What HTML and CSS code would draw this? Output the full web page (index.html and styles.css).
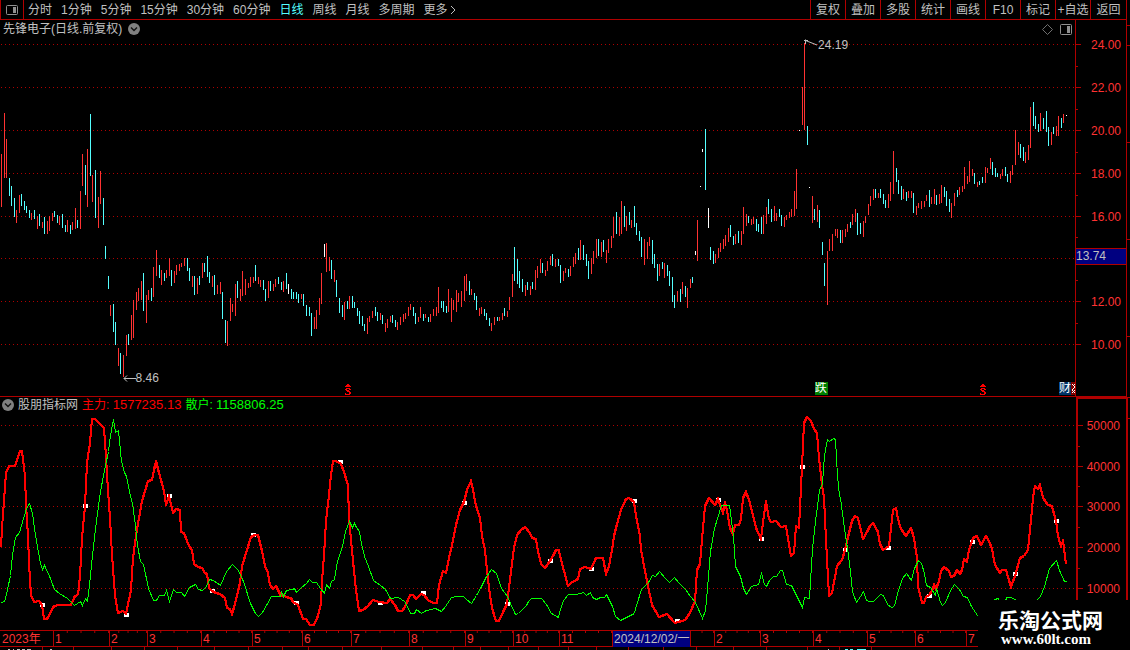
FILE: index.html
```html
<!DOCTYPE html>
<html lang="zh-CN">
<head>
<meta charset="utf-8">
<title>先锋电子 日线</title>
<link rel="stylesheet" href="styles.css">
</head>
<body>
<div class="screen">
  <header class="toolbar">
    <button class="toggle" type="button" aria-label="侧栏">
      <svg width="12" height="10" viewBox="0 0 12 10"><rect x=".5" y=".5" width="11" height="9" rx="1" fill="none" stroke="#909090"/><rect x="7" y="2" width="3" height="6" fill="#909090"/></svg>
    </button>
    <nav class="periods">
      <button type="button">分时</button>
      <button type="button">1分钟</button>
      <button type="button">5分钟</button>
      <button type="button">15分钟</button>
      <button type="button">30分钟</button>
      <button type="button">60分钟</button>
      <button type="button" class="current">日线</button>
      <button type="button">周线</button>
      <button type="button">月线</button>
      <button type="button">多周期</button>
      <button type="button" class="more">更多<svg width="6" height="10" viewBox="0 0 6 10"><path d="M1 1L5 5L1 9" fill="none" stroke="#c0c0c0"/></svg></button>
    </nav>
    <nav class="tools">
      <button type="button">复权</button>
      <button type="button">叠加</button>
      <button type="button">多股</button>
      <button type="button">统计</button>
      <button type="button">画线</button>
      <button type="button">F10</button>
      <button type="button">标记</button>
      <button type="button">+自选</button>
      <button type="button">返回</button>
    </nav>
  </header>

  <main class="workspace">
    <section class="panel price">
      <div class="title">
        <h1>先锋电子(日线.前复权)</h1>
        <button type="button" class="round" aria-label="展开"><svg width="12" height="12" viewBox="0 0 12 12"><circle cx="6" cy="6" r="6" fill="#808080"/><path d="M3 4.5L6 7.5L9 4.5" fill="none" stroke="#111" stroke-width="1.4"/></svg></button>
        <div class="corner">
          <svg width="11" height="11" viewBox="0 0 11 11"><path d="M5.5 .5L10.5 5.5L5.5 10.5L.5 5.5Z" fill="none" stroke="#707070"/></svg>
          <svg width="12" height="11" viewBox="0 0 12 11"><rect x=".5" y=".5" width="11" height="10" rx="1" fill="none" stroke="#909090"/><rect x="7" y="2" width="3" height="7" fill="#909090"/></svg>
        </div>
      </div>
      <svg class="plot" id="price" viewBox="0 38 1075 358" preserveAspectRatio="none"></svg>
      <span class="note high"><svg width="13" height="7" viewBox="0 0 13 7"><path d="M0 1.5H4M1.5 .5V5M1.500 1.500L13 6" fill="none" stroke="#c0c0c0"/></svg>24.19</span>
      <span class="note low"><svg width="13" height="7" viewBox="0 0 13 7"><path d="M1 3.5H13M4 .5L1 3.5L4 6.5" fill="none" stroke="#c0c0c0"/></svg>8.46</span>
      <span class="dividend first"><svg width="6" height="11"><use href="#dividend-sign"/></svg></span>
      <span class="dividend second"><svg width="6" height="11"><use href="#dividend-sign"/></svg></span>
      <span class="badge fall">跌</span>
      <span class="badge report">财</span>
      <span class="badge clipped"><svg width="4" height="13" viewBox="0 0 4 13"><path d="M1 2L4 5L1 8L4 11M4 2L2 4M4 8L1 11" fill="none" stroke="#fff"/></svg></span>
    </section>
    <aside class="scale price-scale">
      <svg id="price-scale"></svg>
      <span class="cursor-price">13.74</span>
    </aside>
    <aside class="edge"><svg id="edge" viewBox="0 0 4 610" preserveAspectRatio="none"></svg></aside>

    <section class="panel indicator">
      <div class="title">
        <button type="button" class="round" aria-label="展开"><svg width="12" height="12" viewBox="0 0 12 12"><circle cx="6" cy="6" r="6" fill="#808080"/><path d="M3 4.5L6 7.5L9 4.5" fill="none" stroke="#111" stroke-width="1.4"/></svg></button>
        <h2>股朋指标网</h2>
        <span class="main-force">主力: <b>1577235.13</b></span>
        <span class="retail">散户: <b>1158806.25</b></span>
      </div>
      <svg class="plot" id="indicator" viewBox="0 413 1075 217" preserveAspectRatio="none"></svg>
    </section>
    <aside class="scale indicator-scale"><svg id="indicator-scale"></svg></aside>
  </main>

  <footer>
    <ol class="timeline">
      <li class="plain">2023年</li><li>1</li><li>2</li><li>3</li><li>4</li><li>5</li><li>6</li><li>7</li><li>8</li><li>9</li><li>10</li><li>11</li><li class="cursor-date">2024/12/02/一</li><li class="half"></li><li>2</li><li>3</li><li>4</li><li>5</li><li>6</li><li class="plain-last">7</li>
    </ol>
    <svg class="strip" id="strip" viewBox="0 0 1130 3" preserveAspectRatio="none"></svg>
  </footer>
  <div class="watermark"><strong>乐淘公式网</strong><span>www.60lt.com</span></div>
</div>
<svg class="symbols" aria-hidden="true"><symbol id="dividend-sign" viewBox="0 0 6 11"><path d="M2 0H4V1H5V2H6V3H0V2H1V1H2ZM1 4H5V5H6V6H4V5H2V6H4V7H5V8H6V10H5V11H0V9H1V10H4V8H2V7H1V6H0V5H1Z" fill="#f00" shape-rendering="crispEdges"/></symbol></svg>
<script src="chart.js"></script>
</body>
</html>
```

FILE: styles.css
```css
* { box-sizing: border-box; }
:root { --line: #b00000; --text: #c0c0c0; --red: #ff3232; }
body {
  margin: 0;
  background: #000;
  color: var(--text);
  font: 12px/16px "Liberation Sans", "Noto Sans CJK SC", sans-serif;
}
button { padding: 0; border: 0; background: none; color: inherit; font: inherit; white-space: nowrap; cursor: pointer; }
h1, h2 { margin: 0; font: inherit; }
svg { display: block; }
.screen { position: relative; display: flex; flex-direction: column; min-height: 100vh; overflow: hidden; }

.toolbar { display: flex; height: 20px; margin-right: 3px; border: solid var(--line); border-width: 0 1px 1px; }
.toggle { display: grid; place-items: center; width: 23px; border-right: 1px solid var(--line); }
.periods { display: flex; gap: 9px; padding-left: 4px; }
.periods .current { color: #54ffff; }
.more { display: flex; align-items: center; gap: 2px; }
.tools { display: flex; margin-left: auto; }
.tools button { width: 35px; border-left: 1px solid var(--line); }
.tools button:last-child { width: 36px; }

.workspace {
  flex: 1;
  display: grid;
  grid-template-columns: minmax(0, 1fr) 51px 4px;
  grid-template-rows: minmax(0, 377fr) minmax(0, 233fr);
}
.panel { position: relative; display: flex; flex-direction: column; min-height: 0; overflow: hidden; }
.price { border-bottom: 1px solid var(--line); }
.title { display: flex; align-items: center; flex: none; }
.price .title { height: 18px; padding: 0 3px; gap: 6px; }
.indicator .title { height: 16px; padding: 0 2px; gap: 4px; }
.title b { font-weight: normal; font-size: 13px; }
.corner { display: flex; gap: 7px; margin-left: auto; }
.main-force { color: #f00; }
.retail { color: #0f0; }
.plot { flex: 1; width: 100%; min-height: 0; shape-rendering: crispEdges; }

.note { position: absolute; display: flex; align-items: center; line-height: 12px; }
.high { left: 74.8%; top: 19px; gap: 1px; }
.high svg { margin-bottom: 5px; }
.low { left: 11.4%; bottom: 12px; }
.dividend { position: absolute; bottom: 1px; }
.first { left: 32.1%; }
.second { left: 91.2%; }
.badge { position: absolute; bottom: 1px; height: 13px; overflow: hidden; color: #fff; line-height: 12px; }
.fall { left: 75.8%; width: 13px; background: #008000; }
.report { right: 4px; width: 12px; background: #003366; }
.clipped { right: 0; width: 4px; background: #800000; }

.scale { position: relative; min-height: 0; }
.scale svg { width: 100%; height: 100%; shape-rendering: crispEdges; }
.scale text { fill: var(--red); text-anchor: end; }
.price-scale { border-left: 1px solid var(--line); border-bottom: 1px solid var(--line); }
.indicator-scale { margin-left: 1px; border: solid var(--line); border-width: 2px 0 0 2px; }
.cursor-price {
  position: absolute; left: 0; right: 0; top: 60.6%; height: 17px;
  border: solid var(--line); border-width: 1px 0;
  background: #000080; line-height: 15px;
}
.edge { grid-column: 3; grid-row: 1 / 3; border-left: 1px solid var(--line); min-height: 0; }
.edge svg { width: 100%; height: 100%; shape-rendering: crispEdges; }
.indicator { grid-column: 1; grid-row: 2; }
.indicator-scale { grid-column: 2; grid-row: 2; }

.timeline {
  display: grid;
  grid-template-columns: 53fr 56fr 38fr 54fr 51fr 50fr 49fr 58fr 56fr 48fr 46fr 53fr 78fr 24fr 46fr 53fr 54fr 48fr 51fr 12fr 152fr;
  height: 17px; margin: 0; padding: 0;
  border: solid var(--line); border-width: 1px 0;
  color: var(--red); list-style: none;
}
.timeline li {
  min-width: 0; padding-left: 1px; border-left: 1px solid var(--line);
  background: linear-gradient(90deg, transparent calc(100% - 1px), var(--line) 0) 0 0 / 25% 2px repeat-x;
  white-space: nowrap;
}
.timeline .plain { background: none; border-color: transparent; }
.timeline .plain-last { background: none; }
.timeline .half { background-size: 50% 2px; }
.timeline .cursor-date { background: #000080; color: var(--text); }
.strip { width: 100%; height: 3px; shape-rendering: crispEdges; }

.watermark {
  position: absolute; right: 0; bottom: 0; width: 152px; height: 50px;
  padding: 7px 0 0 20px; background: #000; color: #fff;
}
.watermark strong { display: block; font: bold 21px/24px "Noto Sans CJK SC", sans-serif; }
.watermark span { display: block; padding-left: 3px; font: bold 15px/16px "Liberation Serif", serif; }
.symbols { position: absolute; width: 0; height: 0; }
```

FILE: chart.js
```js
// Bars are "<kind><x> <high> <low>" in thirds of a unit, relative to the block's origin.
// r = up, c = down, w = flat or limit day.
const barBlocks = [
  [0, 90, "r4 192 350;r13 69 263;r19 147 261;c28 264 317;c34 288 347;c43 324 380;r49 360 398;r58 315 368;c64 312 345;c73 333 357;c79 348 366;c88 360 383;r94 369 389;c103 360 386;r112 380 416;c118 372 407;r127 396 413;c133 381 431;r142 393 431;r148 380 422;r157 369 392;c163 363 380;c172 375 396;r178 380 402;c187 372 413;c196 405 425;r202 390 425;c211 405 431;r217 396 419;r226 354 416;c232 390 413;r241 303 416;r247 192 287;c256 225 314;r262 177 350;c271 72 257;r277 255 335;c286 240 383;r295 321 413;r301 243 341;c310 324 404;c316 468 506;c325 558 596;r331 645 677;c340 642 725;c346 696 764;r355 774 827;c361 789 851;r370 795 860;r379 735 797;c385 732 764;r394 675 749;r400 630 743;r409 606 659;r415 594 632;r424 573 629;c430 549 662;r439 615 698;r445 600 629;c454 594 632;r460 531 620;r469 480 557;c478 525 563;r484 540 584;c493 549 572;r499 540 563;r508 506 557;c514 540 587;r523 543 578;r529 525 554;r538 522 542;r544 519 530;r553 504 527;c562 504 542;c568 534 572;r577 558 590;c583 558 614;r592 564 611;c598 558 584;r607 519 563;c613 519 545;c622 498 560;c628 546 578;r637 558 590;c643 555 614;r652 585 611;r661 576 611;c667 606 686;c676 690 758;r682 693 767;r691 624 692;r697 642 665;r706 582 677;c712 573 623;r721 597 632;r727 543 617;r736 567 614;r745 579 593;r751 561 590;r760 561 578;c766 525 572;r775 561 581;r781 570 590;c790 570 599;c796 597 632;r805 573 623;c811 573 602;r820 582 602;r826 567 590;c835 561 581;c844 576 599;r850 573 605;c859 549 596;w865 582 611"],
  [280, 180, "c34 327 356;c40 336 356;c49 336 356;c55 342 366;r64 342 356;c70 342 377;c79 375 407;c88 381 407;c94 399 467;r103 411 446;r109 390 446;r118 354 404;r124 279 371;w133 192 230;r139 189 275;r148 231 272;c154 240 296;r163 270 305;c169 300 350;c178 354 398;c187 375 410;r193 366 419;c202 363 386;r208 348 386;c217 348 383;c223 366 383;c232 384 407;c238 393 431;c247 408 437;c253 432 452;r262 414 461;r268 408 425;r277 393 413;c286 381 407;c292 396 422;r301 399 419;c307 405 431;r316 429 455;r322 417 443;r331 408 425;c337 405 428;c346 420 440;r352 426 449;r361 411 434;r370 402 425;r376 399 416;r385 381 407;r391 372 389;c400 381 407;c406 399 431;r415 411 425;r421 381 413;c430 402 422;r436 402 413;c445 411 425;r451 402 425;r460 387 407;r469 381 407;r475 321 398;c484 363 383;c490 363 395;c499 378 398;r505 327 395;r514 354 425;r520 360 389;r529 330 395;r535 339 365;r544 333 380;r553 288 362;r559 282 332;c568 303 344;r574 327 344;c583 339 359;c589 348 389;r598 384 407;r604 381 401;c613 387 407;c619 399 419;c628 414 437;r634 429 452;r643 411 434;c652 411 422;r658 411 422;r667 399 419;c673 384 407;r682 393 410;r688 351 389;r697 282 350;c703 201 302;c712 237 311;c718 273 323;c727 297 335;r736 315 347;c742 306 329;r751 318 344;c757 306 326;r766 270 329;r772 258 293;r781 237 278;c787 249 278;r796 270 287;r802 243 272;r811 228 254;c817 222 257;r826 237 260;c835 237 257;c841 255 308;r850 273 302;r856 264 278;c865 267 290"],
  [560, 120, "r31 438 467;r40 411 440;r46 399 431;c55 384 419;r61 360 419;c70 375 419;c79 402 437;c85 423 476;r94 414 461;r100 393 431;r109 357 413;c115 357 407;r124 366 410;c130 360 395;r139 390 428;r145 357 398;r154 348 383;r160 291 353;c169 276 341;r178 291 347;r184 243 341;c193 258 320;r199 288 332;c208 276 314;r214 300 323;c223 258 320;c229 309 344;c238 333 362;c244 351 410;r253 357 434;r262 366 416;r268 351 377;c277 360 431;c283 402 443;c292 432 482;r298 432 467;c307 426 446;r313 429 473;c322 435 467;c328 453 497;c337 471 545;c343 525 563;r352 513 545;c361 507 545;r367 486 521;c376 498 530;r382 504 563;r391 477 503;c397 471 488;w406 393 404;r412 300 422;w421 198 200;w427 87 95;c436 27 209;w445 264 323;c451 381 419;c460 393 431;r466 402 428;r475 384 413;r481 369 395;r490 357 386;r496 345 377;r505 324 365;c511 315 350;c520 348 374;r526 342 371;c535 333 368;r544 333 374;r550 261 341;r559 282 317;c565 288 308;r574 297 314;r580 291 311;c589 297 332;c595 312 335;c604 291 341;r610 285 341;r619 261 311;c625 237 281;c634 267 305;r643 258 302;r649 279 302;c658 267 290;c664 285 317;r673 291 320;r679 285 299;r688 276 293;r694 267 290;r703 213 287;r709 147 266"],
  [790, 30, "w28 300 302;r37 171 284;r43 40 299;c52 288 344;w58 471 473;r67 498 578;c73 537 569;r82 525 575;c88 540 593;c97 636 674;c103 699 767;r112 663 824;r118 627 662;r127 612 662;r136 597 617;r142 597 623;c151 600 638;r157 600 638;r166 597 620;r172 582 605;c181 576 593;r187 552 584;r196 537 575;c202 549 614;c211 579 611;r220 573 620;r226 558 578;r235 522 554;r241 498 527;r250 477 509;c256 477 503;r265 489 503;c271 477 503;c280 492 521;c286 510 533;r295 492 533;r301 456 512;r310 363 491;c319 414 455;c325 450 491;c334 468 509;r340 477 506;c349 486 512;r355 483 503;r364 483 503;c370 489 548;r379 528 554;r385 519 533;r394 513 536;r403 513 530;r409 495 512;c418 480 530;r424 501 521;r433 477 521;c439 495 524;r448 492 521;r454 465 518;c463 471 500;c469 483 527;c478 507 545;r484 519 563;r493 489 527;c502 480 500;r508 471 494;r517 468 485;r523 411 476;r532 438 461;r538 393 455;r547 417 437;c553 429 461;r562 456 470;c568 453 464;c577 441 458;r586 411 458;r592 414 428;r601 384 416;c607 396 434;c616 414 440;c622 429 440;r631 432 446;r637 417 437;c646 411 437;c652 432 455;r661 423 458;r667 405 434;r676 300 404;r685 336 374;c691 342 383;c700 351 392;r706 366 398;r715 345 389;r721 231 353;c730 216 287;c736 258 296;c745 282 305;r751 249 302;c760 264 296;c769 243 305;c775 291 347;r784 306 344;c790 291 311;r799 288 317;r805 258 317;c814 264 293;r820 252 278;w829 255 257"]
];

const mainForce = [
  [0, "5,458 8,400 12,320 18,236 27,215 46,215 52,195 60,170 67,170 76,245 80,330 84,425 88,505 93,600 104,621 117,618 128,630 133,674 143,674 163,635 180,630 215,632 225,603 235,600 242,545 246,430 256,335 261,205 270,145 276,72 287,72 300,87 312,100 318,185 326,290 331,370 338,480 345,600 355,655 370,648 380,658 393,585 399,490 408,425 417,370 427,320 437,288 444,258 458,255 468,200 478,235 492,290 499,330 508,305 521,355 530,344 541,346 545,412 553,416 568,455 577,467 583,508 595,518 607,520 615,536 623,538 628,580 638,588 650,594 662,597 677,610 682,640 691,642 698,658 706,628 722,565 728,515 742,465 755,427 765,420 776,422 788,470 797,515 806,535 812,572 820,583 828,575 845,603 852,600 858,608 870,609"],
  [280, "34,609 40,623 55,630 70,674 80,674 90,692 103,690 115,665 124,625 128,560 133,480 140,380 147,300 155,240 161,198 170,198 184,208 194,232 204,272 208,370 215,435 222,530 230,585 237,650 250,646 265,635 280,617 298,623 323,624 331,612 345,630 355,648 367,648 377,636 390,600 400,600 408,612 416,608 425,597 433,600 445,615 460,624 471,624 477,570 490,528 500,536 508,490 518,450 530,390 542,345 553,322 563,285 573,260 580,285 590,335 600,370 606,425 615,465 621,525 628,580 636,640 648,678 657,678 672,645 682,628 688,580 695,530 703,460 712,420 725,405 735,398 750,414 758,430 768,433 776,470 785,508 797,519 810,500 820,485 829,466 837,465"],
  [560, "0,485 12,530 25,573 35,565 56,553 61,522 75,517 95,523 108,490 130,491 139,537 148,515 157,465 163,425 173,388 185,345 198,313 207,311 222,322 230,365 240,425 245,465 257,530 266,575 276,630 298,668 322,659 345,684 375,677 392,655 406,620 412,527 422,508 430,400 437,335 447,310 466,330 476,313 489,355 497,323 503,350 512,400 519,418 526,391 537,390 545,372 549,310 558,291 567,315 578,350 590,400 604,433 612,360 619,318 627,372 635,383 650,378 663,398 680,395 693,484 703,474 709,393 719,400 727,218 733,85 742,66 755,78 763,103 773,115 779,190 786,270 794,310 800,435 808,603 818,595 831,513"],
  [840, "8,497 17,467 22,440 36,380 47,363 54,370 69,432 81,412 90,394 101,385 115,412 122,448 130,467 148,455 153,400 159,347 170,340 175,372 185,402 200,424 215,400 224,430 232,490 236,575 246,625 252,625 258,607 268,602 278,590 284,570 290,582 299,560 304,530 314,516 328,530 334,547 342,543 351,525 360,537 368,525 373,492 382,503 389,465 400,430 412,425 424,452 438,425 447,440 457,462 466,510 481,535 487,525 498,527 513,577 526,545 540,490 553,483 566,465 573,375 580,310 585,275 594,282 601,272 610,310 625,332 638,333 644,357 649,380 655,425 663,455 671,440 678,508"]
];
const retail = [
  [0, "4,622 14,620 20,598 30,540 36,480 47,428 57,413 80,340 89,326 97,355 106,420 120,505 127,523 134,511 150,550 163,583 178,596 202,611 222,632 240,620 248,632 257,610 262,620 268,570 278,480 287,400 300,290 313,225 326,170 332,120 341,73 347,112 354,107 365,200 372,233 380,245 388,290 397,325 405,390 412,450 422,500 430,508 446,580 460,616 470,617 478,602 492,602 500,585 508,620 521,583 530,593 545,593 554,603 568,578 585,567 595,583 608,586 620,575 628,552 640,555 662,570 680,530 697,508 714,526 730,560 751,625 767,655 775,663 788,651 800,630 815,605 832,605"],
  [280, "0,605 5,593 9,603 20,587 36,583 42,580 50,592 65,578 80,565 89,553 98,563 110,562 122,580 133,594 140,568 148,580 155,558 163,553 172,500 186,455 197,410 208,378 216,397 223,384 230,398 238,410 245,445 254,485 266,515 280,555 300,570 316,582 332,610 355,608 372,620 382,635 392,656 402,656 410,644 424,656 440,645 465,640 483,649 495,635 515,608 533,605 550,604 558,613 575,624 590,600 605,573 620,545 634,523 650,535 664,580 682,603 690,625 706,657 715,655 738,630 744,618 755,611 783,610 800,628 815,655 836,667"],
  [560, "0,643 10,617 25,597 50,597 70,593 80,601 92,593 98,608 108,614 120,607 132,607 140,597 158,635 165,665 180,677 205,665 222,656 230,630 245,582 265,563 278,540 285,544 299,530 315,550 329,563 344,548 355,563 375,583 392,603 405,623 427,670 437,645 443,580 450,470 462,400 483,332 507,332 515,375 521,425 527,515 540,543 549,580 559,598 574,575 595,567 603,534 612,568 620,573 627,557 640,545 650,543 662,525 668,527 680,567 695,570 708,600 727,638 733,607 748,610 758,460 766,380 778,285 786,265 793,180 802,132 808,140 820,130 826,133 831,245 838,300"],
  [840, "0,310 12,400 24,480 30,530 38,590 49,622 60,603 70,590 78,615 88,619 100,619 120,598 130,602 142,627 154,638 163,633 175,585 186,550 200,536 214,555 222,520 236,495 244,504 252,535 260,570 270,577 285,600 290,580 300,622 307,631 316,622 330,585 342,568 358,582 370,605 383,608 395,635 412,661 450,660 463,612 475,610 480,625 495,620 500,608 510,607 527,612 550,640 585,640 592,612 600,603 612,575 628,520 649,497 657,525 672,558 678,558"]
];
const signals = [
  [0, "256,335 128,630 380,660 508,305 638,588 760,420"],
  [280, "50,626 180,203 301,624 431,596 553,324 682,627 811,498"],
  [560, "94,524 223,320 352,680 475,315 604,434 727,218"],
  [840, "17,467 146,459 268,603 398,443 526,537 649,380"]
];

const el = id => document.getElementById(id);
const third = n => Math.floor(n / 3);
const read = blocks => blocks.flatMap(([x, list]) =>
  list.split(" ").map(p => p.split(",").map(Number)).map(([a, b]) => [x + third(a), 395 + third(b)]));
const grid = rows => `<path d="${rows.map(y => `M1 ${y}.5H1075`).join("")}" fill="none" stroke="#b00000" stroke-dasharray="1 3"/>`;

// Price panel
const colors = { r: "#ff3232", c: "#54ffff", w: "#ffffff" };
const bars = barBlocks.flatMap(([x, y, list]) => list.split(";").map(item => {
  const [a, top, bottom] = item.slice(1).split(" ").map(Number);
  const y1 = y + third(top), y2 = y + third(bottom) + 1;
  return `<rect x="${x + third(a)}" y="${y1}" width="1" height="${y2 - y1}" fill="${colors[item[0]]}"/>`;
}));
el("price").innerHTML = grid([44, 87, 130, 173, 216, 258, 301, 344]) + bars.join("");

// Indicator panel. A pen of size n is square: one thin line for each of its cells.
const line = (blocks, color, pen) => {
  let out = "";
  for (let i = 0; i < pen; i++) for (let j = 0; j < pen; j++) {
    const points = read(blocks).map(([x, y]) => `${x + 0.5 - i},${y + 0.5 - j}`).join(" ");
    out += `<polyline points="${points}" fill="none" stroke="${color}"/>`;
  }
  return out;
};
el("indicator").innerHTML = grid([425, 466, 506, 547, 588]) +
  read(signals).map(([x, y]) => `<rect x="${x - 2}" y="${y - 2}" width="5" height="4" fill="#fff"/>`).join("") +
  line(mainForce, "#f00", 2) + line(retail, "#0f0", 1);

// Scales: labels sit at a share of the panel height
function scale(id, top, height, majors, minors, labelX) {
  const at = y => ((y - top) / height * 100).toFixed(2) + "%";
  const tick = (y, w) => `<rect x="0" y="${at(y)}" width="${w}" height="1" fill="#b00000"/>`;
  el(id).innerHTML = majors.map(([y, label]) => tick(y, 5) +
    `<text x="${labelX}" y="${at(y)}" dy="5">${label}</text>`).join("") +
    minors.map(y => tick(y, 2)).join("");
}
scale("price-scale", 20, 376,
  [[44, "24.00"], [87, "22.00"], [130, "20.00"], [173, "18.00"], [216, "16.00"], [301, "12.00"], [344, "10.00"]],
  [66, 109, 152, 195, 237, 280, 323], 45);
scale("indicator-scale", 399, 231,
  [[425, "50000"], [466, "40000"], [506, "30000"], [547, "20000"], [588, "10000"]],
  [446, 486, 527, 568], 42);

// Neighbouring panel showing at the right edge, and the row cut off below
const box = (x, y, w, h, c) => `<rect x="${x}" y="${y}" width="${w}" height="${h}" fill="${c}"/>`;
el("edge").innerHTML = box(0, 377, 1, 233, "#b00000") +
  [5, 25, 122, 219, 316, 377, 398].map(y => box(0, y, 4, 1, "#b00000")).join("") +
  [11, 15, 18, 38, 58, 77, 96, 115, 134, 138, 143, 152, 163, 173, 181, 190, 201, 211, 216, 228, 246, 251, 262, 270, 293, 306, 313, 323, 327, 348].map(y => box(2, y, 1, 1, "#c0c0c0")).join("");
el("strip").innerHTML =
  [42, 73, 111, 144, 177, 214, 248, 282, 308, 342, 381, 422, 453, 480, 508, 538, 568, 596, 628, 663, 696, 733, 766, 807, 839, 871].map(x => box(x, 0, 1, 3, "#b00000")).join("") +
  [[8, 2], [13, 1], [17, 3], [22, 3], [27, 4], [50, 2], [828, 1]].map(([x, w]) => box(x, 2, w, 1, "#c0c0c0")).join("") +
  [[845, 3], [850, 3], [857, 9]].map(([x, w]) => box(x, 2, w, 1, "#54ffff")).join("");
```
